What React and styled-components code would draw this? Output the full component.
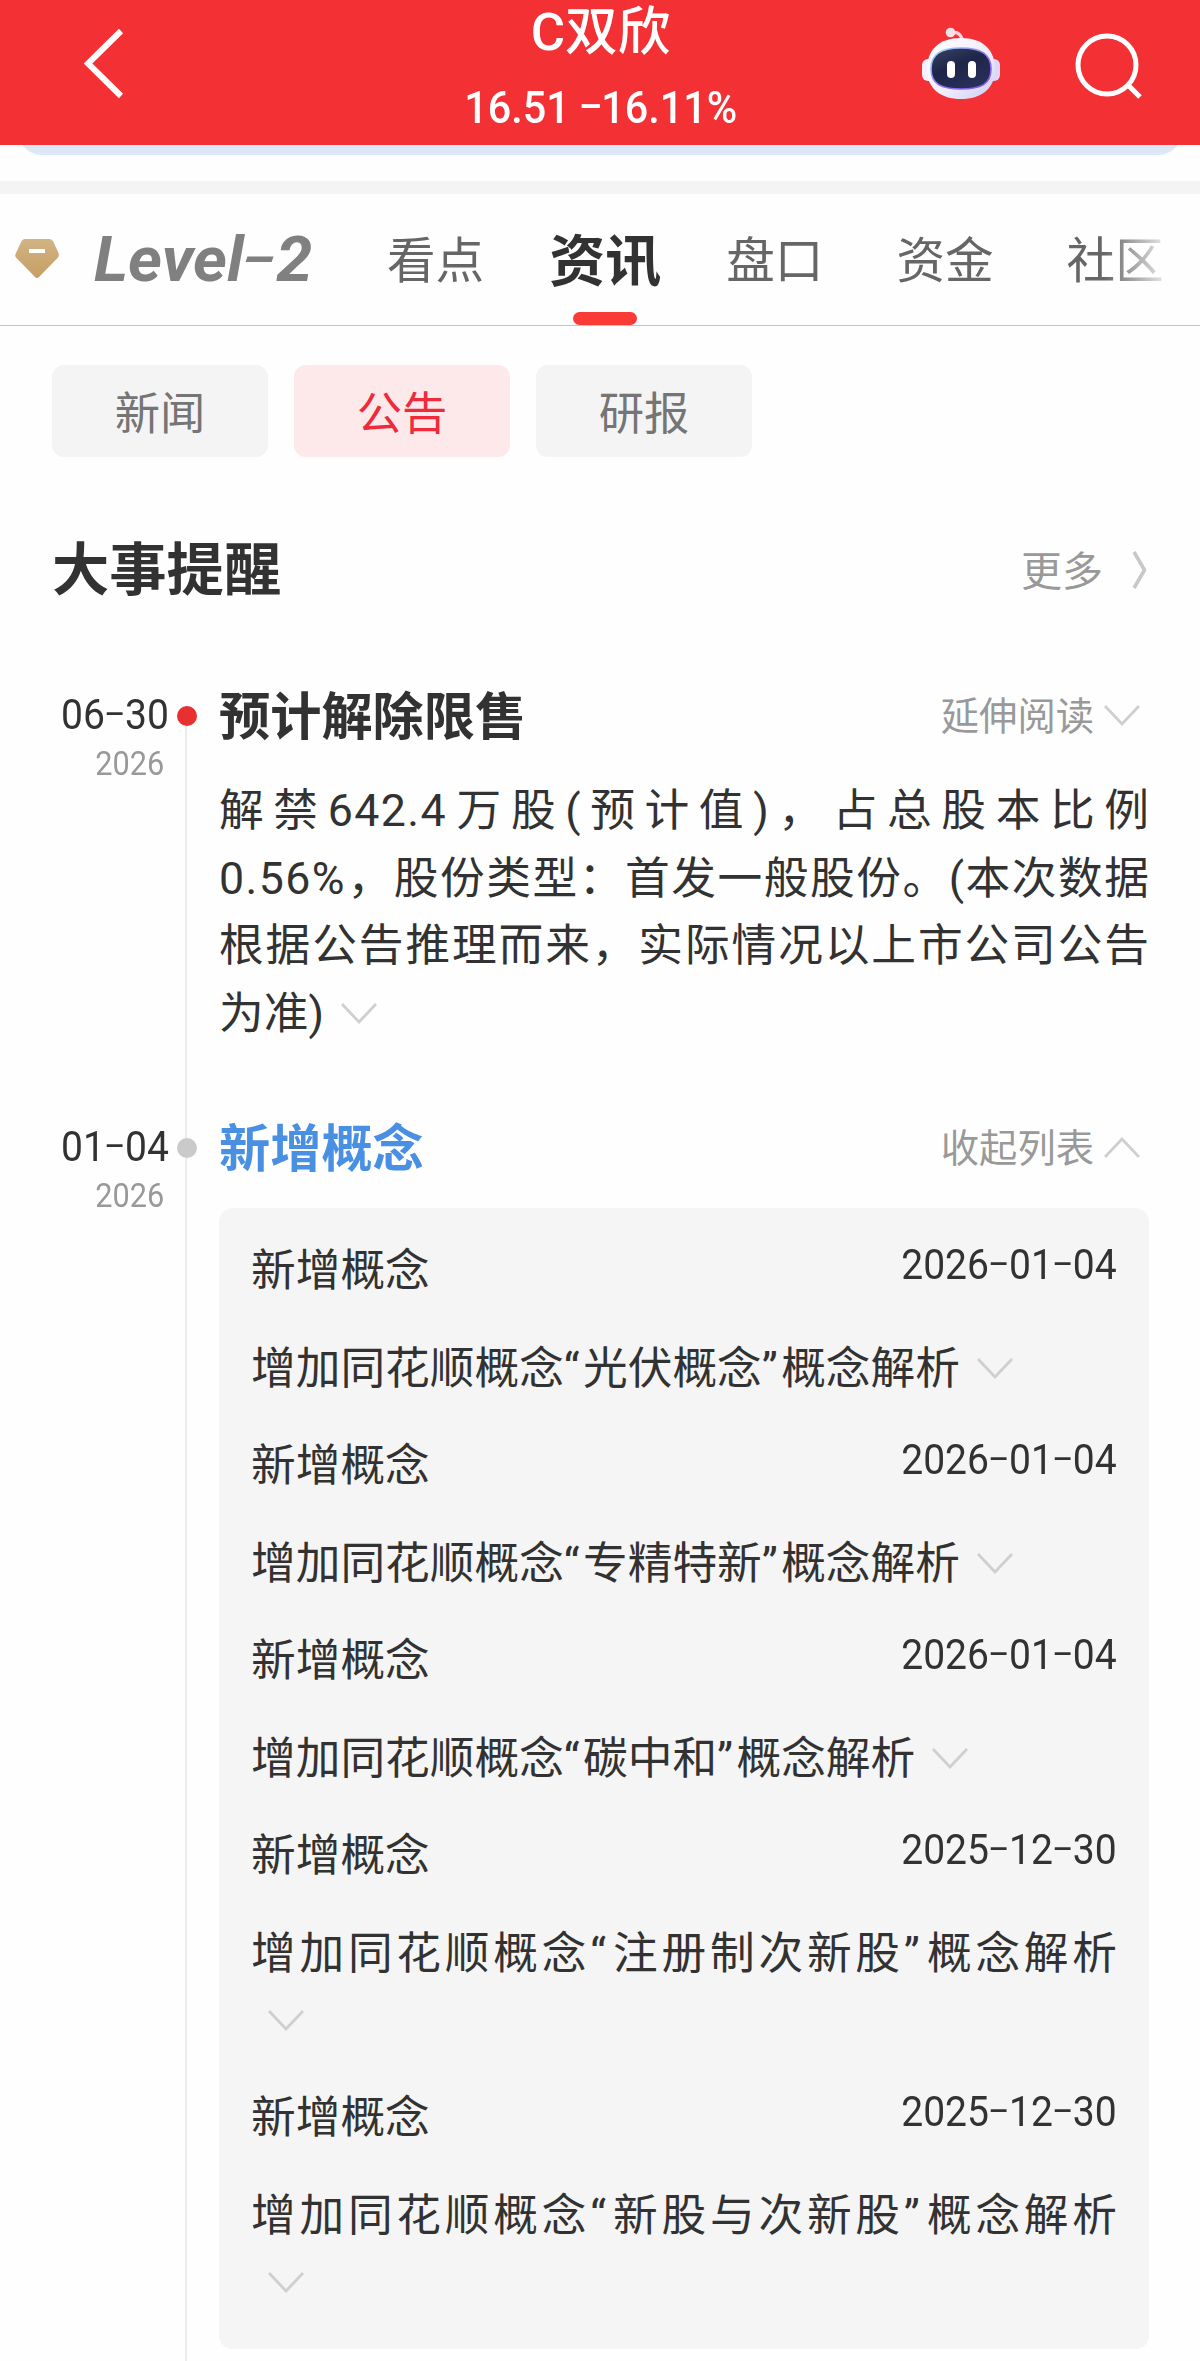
import React from "react";
import styled, { createGlobalStyle, css } from "styled-components";

const CJK = `"Noto Sans CJK SC", sans-serif`;
const MIXED = `Roboto, "Noto Sans CJK SC", sans-serif`;

const GlobalStyle = createGlobalStyle`
  * { box-sizing: border-box; }
  body {
    margin: 0;
    background: #fefefe;
    color: #323232;
    font-family: ${CJK};
    text-spacing-trim: space-all;
  }
`;

const Page = styled.div`
  display: flex;
  flex-direction: column;
  width: 1200px;
  height: 2361px;
  overflow: hidden;
  background: #fefefe;
`;

/* ---------- numerals ---------- */

const Numerals = styled.span`
  display: inline-block;
  font-family: Roboto, sans-serif;
  font-size: ${(p) => p.$size}px;
  font-weight: ${(p) => p.$weight || 400};
  line-height: 1;
  white-space: pre;
  color: ${(p) => p.$color || "#323232"};
  transform: scaleX(0.93);
  transform-origin: ${(p) => p.$origin || "right"} center;
`;

const Dash = styled.span`
  display: inline-block;
  width: 0.51em;
  text-align: center;
  transform: translateY(-0.055em) scale(1.7, 0.9);
`;

function Num({ children, ...rest }) {
  return (
    <Numerals {...rest}>
      {children.split(/(-)/).map((part, i) =>
        part === "-" ? <Dash key={i}>-</Dash> : part
      )}
    </Numerals>
  );
}

/* ---------- header ---------- */

const Header = styled.header`
  display: grid;
  grid-template-columns: 400px 401px 1fr;
  flex: none;
  height: 145px;
  background: #f33135;
  color: #fff;
`;

const BackButton = styled.div`
  padding: 28px 0 0 80px;
`;

const Quote = styled.div`
  display: flex;
  flex-direction: column;
  align-items: center;
`;

const StockName = styled.div`
  height: 86px;
  font-family: ${MIXED};
  font-size: 52.6px;
  font-weight: 500;
  line-height: 65px;
  white-space: nowrap;
`;

const HeaderActions = styled.div`
  display: flex;
  align-items: flex-start;
  gap: 74px;
  padding: 26px 0 0 120px;
`;

const SearchSlot = styled.div`
  padding-top: 6px;
`;

const BannerEdge = styled.div`
  flex: none;
  height: 36px;
  padding: 0 18px;
  overflow: hidden;

  &::before {
    content: "";
    display: block;
    height: 50px;
    margin-top: -40px;
    border-radius: 24px;
    background: #dce8f7;
  }
`;

const Divider = styled.div`
  flex: none;
  height: 13px;
  background: #f4f4f4;
`;

/* ---------- tabs ---------- */

const Tabs = styled.nav`
  display: flex;
  flex: none;
  height: 132px;
  padding-left: 15px;
  border-bottom: 1px solid #c4c4c4;
`;

const DiamondSlot = styled.div`
  width: 79px;
  padding-top: 45px;
`;

const LevelTab = styled.div`
  width: 293px;
  font-family: Roboto, sans-serif;
  font-size: 63px;
  font-style: italic;
  font-weight: 700;
  line-height: 132px;
  color: #808080;
  white-space: nowrap;
  transform: scaleX(1.03);
  transform-origin: left center;
`;

const LevelDash = styled.span`
  display: inline-block;
  width: 0.5em;
  text-align: center;
  transform: translateY(-0.03em) scale(1.5, 0.8);
`;

const Tab = styled.div`
  display: flex;
  flex-direction: column;
  align-items: center;
  justify-content: space-between;
  height: 131px;
  margin-right: 73px;
  font-size: 48.6px;
  line-height: 127px;
  color: #666;
  white-space: nowrap;
  ${(p) =>
    p.$active &&
    css`
      margin: 0 65px 0 -8px;
      font-size: 56px;
      font-weight: 700;
      line-height: 125px;
      color: #323232;
      &::after {
        content: "";
        width: 64px;
        height: 13px;
        margin-top: -7px;
        border-radius: 7px;
        background: #fa3a35;
      }
    `}
  ${(p) =>
    p.$faded &&
    css`
      margin-right: 0;
      mask-image: linear-gradient(90deg, #000 38%, transparent 112%);
    `}
`;

/* ---------- filters ---------- */

const Filters = styled.div`
  display: flex;
  flex: none;
  gap: 26px;
  padding: 39px 52px 0;
`;

const Filter = styled.div`
  width: 216px;
  height: 92px;
  border-radius: 12px;
  font-size: 45.3px;
  line-height: 90px;
  text-align: center;
  color: ${(p) => (p.$active ? "#ee2b3b" : "#757575")};
  background: ${(p) => (p.$active ? "#fde9ea" : "#f4f4f4")};
`;

/* ---------- section head ---------- */

const SectionHead = styled.div`
  display: flex;
  flex: none;
  align-items: center;
  justify-content: space-between;
  height: 80px;
  margin-top: 71px;
  padding: 0 52px 0 52px;
`;

const SectionTitle = styled.h2`
  margin: 0;
  padding-bottom: 5px;
  font-size: 57.3px;
  font-weight: 700;
  line-height: 75px;
`;

const More = styled.div`
  display: flex;
  align-items: center;
  gap: 29px;
  font-size: 41px;
  line-height: 78px;
  color: #999;

  svg {
    margin-top: 3px;
  }
`;

/* ---------- timeline ---------- */

const Timeline = styled.div`
  display: flex;
  flex-direction: column;
  flex: 1;
  margin-top: 74px;
`;

const Event = styled.section`
  display: grid;
  grid-template-columns: 169px 35px 930px;
  flex: ${(p) => (p.$last ? "1" : "none")};
  height: ${(p) => (p.$last ? "auto" : "432px")};
`;

const When = styled.div`
  display: flex;
  flex-direction: column;
  align-items: flex-end;
  gap: 11px;
  padding-top: 12px;
`;

const Year = styled.div`
  display: flex;
  padding-right: 5px;
`;

const Rail = styled.div`
  padding: 24px 0 0 8px;
  background: linear-gradient(#ebebeb, #ebebeb) 16px
    ${(p) => (p.$first ? "34px" : "0")} / 2px 100% no-repeat;
`;

const Dot = styled.div`
  width: 20px;
  height: 20px;
  border-radius: 50%;
  background: ${(p) => p.$color};
`;

const Body = styled.div`
  width: 930px;
  margin-left: 15px;
`;

const EventHead = styled.div`
  display: flex;
  align-items: center;
  justify-content: space-between;
  height: 66px;
  padding-right: 9px;
`;

const EventTitle = styled.h3`
  margin: 0;
  padding-bottom: 4px;
  font-size: 51.2px;
  font-weight: 700;
  line-height: 62px;
  color: ${(p) => p.$color || "#323232"};
`;

const Toggle = styled.div`
  display: flex;
  align-items: center;
  gap: 10px;
  font-size: 38.3px;
  line-height: 60px;
  color: #999;
  padding-bottom: 3px;

  svg {
    margin-top: 3px;
  }
`;

const Paragraph = styled.p`
  margin: 30px 0 0;
  font-family: ${MIXED};
  font-size: 44.7px;
  line-height: 67.5px;
  text-align: justify;
`;

const Figure = styled.span`
  letter-spacing: 1.4px;
`;

const Panel = styled.div`
  height: 1141px;
  margin-top: 28px;
  padding: 30px 32px 0;
  border-radius: 14px;
  background: #f5f5f5;
`;

const Entry = styled.div`
  margin-bottom: 30px;
  font-family: ${MIXED};
  font-size: 44.7px;
  line-height: 67px;
`;

const EntryHead = styled.div`
  display: flex;
  align-items: flex-start;
  justify-content: space-between;
  margin-bottom: 31px;
`;

const EntryDate = styled.div`
  display: flex;
  padding-top: 6px;
`;

const EntryText = styled.div`
  text-align: justify;
`;

const QuoteMark = styled.span`
  letter-spacing: 3.4px;
`;

const InlineToggle = styled.span`
  display: inline-block;
  width: 78px;
  padding-left: 17px;
  line-height: 1;
  vertical-align: 5px;
`;

/* ---------- icons ---------- */

function Chevron({ up }) {
  return (
    <svg width="36" height="21" viewBox="0 0 36 21" fill="none" stroke="#cfcfcf" strokeWidth="2.8">
      <path d={up ? "M1 20 L18 2 L35 20" : "M1 1 L18 19 L35 1"} />
    </svg>
  );
}

function MoreArrow() {
  return (
    <svg width="16" height="38" viewBox="0 0 16 38" fill="none" stroke="#c8c8c8" strokeWidth="3.6">
      <path d="M2 1 L12.500 19 L2 37" strokeLinejoin="round" />
    </svg>
  );
}

function BackIcon() {
  return (
    <svg width="46" height="72" viewBox="0 0 46 72" fill="none" stroke="#fff" strokeWidth="6">
      <path d="M41 3 L8 35.5 L41 68" />
    </svg>
  );
}

function SearchIcon() {
  return (
    <svg width="68" height="68" viewBox="0 0 68 68" fill="none" stroke="#fff" strokeWidth="5">
      <circle cx="32" cy="33" r="29" />
      <path d="M53 53 L65 65" />
    </svg>
  );
}

function RobotIcon() {
  return (
    <svg width="80" height="74" viewBox="0 0 80 74" fill="none">
      <defs>
        <linearGradient id="shell" x1="0" y1="0" x2="1" y2="1">
          <stop offset="0" stopColor="#fff" />
          <stop offset="0.55" stopColor="#f1eefc" />
          <stop offset="1" stopColor="#c9cdf6" />
        </linearGradient>
        <linearGradient id="rim" x1="0" y1="0" x2="1" y2="1">
          <stop offset="0" stopColor="#9fe0f5" />
          <stop offset="0.5" stopColor="#8f7cf0" />
          <stop offset="1" stopColor="#8a4be8" />
        </linearGradient>
        <linearGradient id="visor" x1="0" y1="0" x2="0.6" y2="1">
          <stop offset="0" stopColor="#3b4266" />
          <stop offset="0.5" stopColor="#1d2548" />
          <stop offset="1" stopColor="#27305a" />
        </linearGradient>
      </defs>
      <path d="M30 7 C37 5 41.500 9 41.500 18" stroke="#fbd3de" strokeWidth="3.4" />
      <circle cx="29.5" cy="6.5" r="4.8" fill="#fbdfe6" />
      <rect x="1" y="33" width="14" height="22" rx="6" fill="#f3effd" />
      <rect x="65" y="33" width="14" height="22" rx="6" fill="#d9d8f8" />
      <path
        d="M40 12 C62 12 74 24 74 43 C74 63 60 73 40 73 C20 73 6 63 6 43 C6 24 18 12 40 12 Z"
        fill="url(#shell)"
      />
      <path
        d="M40 22 C60 22 70 28 70 43 C70 58 60 63 40 63 C20 63 10 58 10 43 C10 28 20 22 40 22 Z"
        fill="url(#visor)"
        stroke="url(#rim)"
        strokeWidth="1.6"
      />
      <rect x="26" y="35" width="8" height="17" rx="4" fill="#fff" />
      <rect x="47" y="35" width="8" height="17" rx="4" fill="#fff" />
    </svg>
  );
}

function DiamondIcon() {
  return (
    <svg width="45" height="40" viewBox="0 0 45 40">
      <defs>
        <linearGradient id="gold" x1="0" y1="0" x2="0" y2="1">
          <stop offset="0" stopColor="#d2b384" />
          <stop offset="1" stopColor="#c69f63" />
        </linearGradient>
      </defs>
      <path
        d="M10 0 H34 Q36.500 0 38 2 L43.500 14 Q44.500 16.500 43 18.500 L24 38 Q22 40 20 38 L1 18.500 Q-0.500 16.500 1 14 L6.500 2 Q8 0 10 0 Z"
        fill="url(#gold)"
      />
      <rect x="14" y="10" width="16" height="4" fill="#fff" />
    </svg>
  );
}

/* ---------- data ---------- */

const entries = [
  { date: "2026-01-04", concept: "光伏概念" },
  { date: "2026-01-04", concept: "专精特新" },
  { date: "2026-01-04", concept: "碳中和" },
  { date: "2025-12-30", concept: "注册制次新股" },
  { date: "2025-12-30", concept: "新股与次新股" },
];

function EventDate({ day, year }) {
  return (
    <When>
      <Num $size={42}>{day}</Num>
      <Year>
        <Num $size={33} $color="#999">{year}</Num>
      </Year>
    </When>
  );
}

export default function App() {
  return (
    <Page>
      <GlobalStyle />
      <Header>
        <BackButton>
          <BackIcon />
        </BackButton>
        <Quote>
          <StockName>C双欣</StockName>
          <Num $size={44.5} $weight={500} $color="#fff" $origin="center">
            16.51 -16.11%
          </Num>
        </Quote>
        <HeaderActions>
          <RobotIcon />
          <SearchSlot>
            <SearchIcon />
          </SearchSlot>
        </HeaderActions>
      </Header>
      <BannerEdge />
      <Divider />
      <Tabs>
        <DiamondSlot>
          <DiamondIcon />
        </DiamondSlot>
        <LevelTab>
          Level<LevelDash>-</LevelDash>2
        </LevelTab>
        <Tab>看点</Tab>
        <Tab $active>资讯</Tab>
        <Tab>盘口</Tab>
        <Tab>资金</Tab>
        <Tab $faded>社区</Tab>
      </Tabs>
      <Filters>
        <Filter>新闻</Filter>
        <Filter $active>公告</Filter>
        <Filter>研报</Filter>
      </Filters>
      <SectionHead>
        <SectionTitle>大事提醒</SectionTitle>
        <More>
          更多
          <MoreArrow />
        </More>
      </SectionHead>
      <Timeline>
        <Event>
          <EventDate day="06-30" year="2026" />
          <Rail $first>
            <Dot $color="#e93030" />
          </Rail>
          <Body>
            <EventHead>
              <EventTitle>预计解除限售</EventTitle>
              <Toggle>
                延伸阅读
                <Chevron />
              </Toggle>
            </EventHead>
            <Paragraph>
              解禁<Figure>642.4</Figure>万股(预计值)，占总股本比例<Figure>0.56%</Figure>，股份类型：首发一般股份。(本次数据根据公告推理而来，实际情况以上市公司公告为准)
              <InlineToggle>
                <Chevron />
              </InlineToggle>
            </Paragraph>
          </Body>
        </Event>
        <Event $last>
          <EventDate day="01-04" year="2026" />
          <Rail>
            <Dot $color="#cacaca" />
          </Rail>
          <Body>
            <EventHead>
              <EventTitle $color="#4a90e2">新增概念</EventTitle>
              <Toggle>
                收起列表
                <Chevron up />
              </Toggle>
            </EventHead>
            <Panel>
              {entries.map((entry) => (
                <Entry key={entry.concept}>
                  <EntryHead>
                    <span>新增概念</span>
                    <EntryDate>
                      <Num $size={42}>{entry.date}</Num>
                    </EntryDate>
                  </EntryHead>
                  <EntryText>
                    增加同花顺概念<QuoteMark>“</QuoteMark>
                    {entry.concept}
                    <QuoteMark>”</QuoteMark>概念解析
                    <InlineToggle>
                      <Chevron />
                    </InlineToggle>
                  </EntryText>
                </Entry>
              ))}
            </Panel>
          </Body>
        </Event>
      </Timeline>
    </Page>
  );
}
